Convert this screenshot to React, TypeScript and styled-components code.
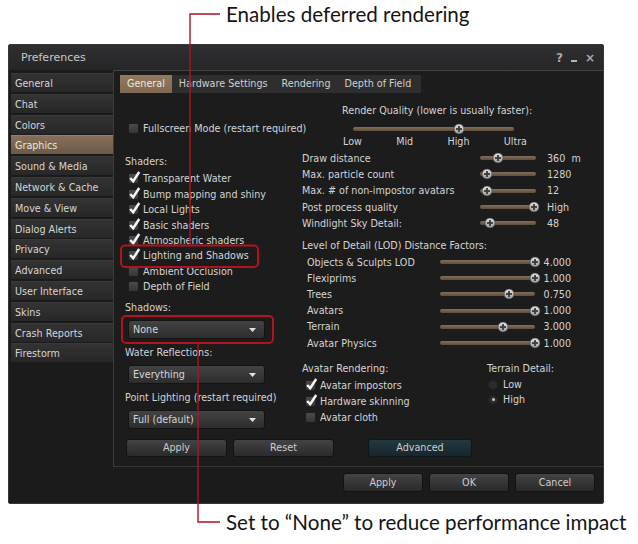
import React from "react";
import styled, { createGlobalStyle } from "styled-components";

const UI_FONT = `"DejaVu Sans", "Noto Sans", sans-serif`;
const NOTE_FONT = `Lato, "Open Sans", sans-serif`;
const RED = "#b3121f";

const Global = createGlobalStyle`
  html, body { margin: 0; padding: 0; background: #fff; }
  body { width: 638px; height: 544px; overflow: hidden; }
`;

const Page = styled.div`
  position: relative;
  width: 638px;
  height: 544px;
  display: flex;
  flex-direction: column;
  background: #fff;
`;

const Note = styled.div<{ $gapAfter?: number; $gapBefore?: number }>`
  font-family: ${NOTE_FONT};
  font-size: 20.6px;
  line-height: 28px;
  height: 28px;
  color: #141414;
  padding-left: 226px;
  white-space: nowrap;
  margin-top: ${(p) => p.$gapBefore ?? 0}px;
  margin-bottom: ${(p) => p.$gapAfter ?? 0}px;
`;

const Callouts = styled.svg`
  position: absolute;
  left: 0;
  top: 0;
  pointer-events: none;
`;

const Window = styled.div`
  margin-left: 8px;
  width: 596px;
  height: 460px;
  box-sizing: border-box;
  border: 1px solid #38353d;
  border-radius: 2px;
  background: #1b1b1b;
  display: flex;
  flex-direction: column;
  font-family: ${UI_FONT};
  font-size: 9.6px;
  color: #d4d4d4;
`;

const TitleBar = styled.div`
  height: 25px;
  flex: none;
  display: flex;
  align-items: center;
  justify-content: space-between;
  padding: 0 8px 0 12px;
  background: linear-gradient(#2f2e31, #262527);
`;

const Title = styled.span`
  font-size: 11px;
  color: #c9c9c9;
`;

const TitleIcons = styled.div`
  display: flex;
  align-items: center;
  gap: 8px;
  color: #a9a9a9;
  font-weight: bold;
`;

const Glyph = styled.span<{ $size: number }>`
  font-size: ${(p) => p.$size}px;
  line-height: 1;
`;

const MinBar = styled.span`
  width: 6px;
  height: 2px;
  margin-top: 6px;
  background: #b5b5b5;
`;

const Main = styled.div`
  height: 397px;
  flex: none;
  display: flex;
`;

const Sidebar = styled.div`
  width: 102px;
  padding: 3px 0 0 2px;
  display: flex;
  flex-direction: column;
  gap: 1.8px;
`;

const SideItem = styled.div<{ $active?: boolean }>`
  height: 19px;
  line-height: 19px;
  padding-left: 4px;
  color: ${(p) => (p.$active ? "#eee6dc" : "#d6d6d6")};
  background: ${(p) =>
    p.$active
      ? "linear-gradient(#86705a, #6c5944)"
      : "linear-gradient(#333333, #272727)"};
  border-top: 1px solid ${(p) => (p.$active ? "#97816a" : "#393939")};
  box-sizing: border-box;
  white-space: nowrap;
`;

const Panel = styled.div`
  flex: 1;
  box-sizing: border-box;
  border-top: 1px solid #454545;
  border-left: 1px solid #3c3c3c;
  border-bottom: 1px solid #383838;
  background: #1c1c1c;
  padding: 4px 0 0 6px;
  display: flex;
  flex-direction: column;
`;

const TabBar = styled.div`
  width: 301px;
  height: 18px;
  display: flex;
  background: #2e2e2e;
`;

const Tab = styled.div<{ $active?: boolean }>`
  padding: 0 7px;
  line-height: 18px;
  white-space: nowrap;
  color: ${(p) => (p.$active ? "#f0e8de" : "#d0d0d0")};
  background: ${(p) => (p.$active ? "linear-gradient(#927a60, #806950)" : "transparent")};
`;

const TopSection = styled.div`
  margin-top: 10px;
  display: flex;
`;

const TopLeft = styled.div`
  width: 213px;
  padding: 20px 0 0 8px;
  box-sizing: border-box;
`;

const RQBlock = styled.div`
  width: 200px;
  display: flex;
  flex-direction: column;
`;

const RQLabel = styled.div`
  padding-left: 9px;
  line-height: 15px;
  white-space: nowrap;
`;

const RQSliderRow = styled.div`
  margin: 5px 0 0 20px;
  height: 12px;
  display: flex;
  align-items: center;
`;

const Ticks = styled.div`
  margin-left: 10px;
  width: 184px;
  display: flex;
  justify-content: space-between;
  line-height: 14px;
`;

const Columns = styled.div`
  display: flex;
`;

const LeftCol = styled.div`
  width: 180px;
  padding-left: 5px;
  box-sizing: border-box;
  display: flex;
  flex-direction: column;
`;

const RightCol = styled.div`
  padding-left: 2px;
  display: flex;
  flex-direction: column;
`;

const Label = styled.div<{ $mt: number; $indent?: number }>`
  margin-top: ${(p) => p.$mt}px;
  padding-left: ${(p) => p.$indent ?? 0}px;
  line-height: 14px;
  white-space: nowrap;
`;

const CheckList = styled.div<{ $mt: number; $row: number; $indent: number }>`
  margin-top: ${(p) => p.$mt}px;
  padding-left: ${(p) => p.$indent}px;
  display: grid;
  grid-auto-rows: ${(p) => p.$row}px;
`;

const CheckRow = styled.label`
  display: flex;
  align-items: center;
  gap: 4px;
  white-space: nowrap;
`;

const Box = styled.span`
  position: relative;
  width: 11px;
  height: 11px;
  flex: none;
  box-sizing: border-box;
  border: 1px solid #1e1e1e;
  border-radius: 2px;
  background: linear-gradient(#4a4a4a, #363636);
`;

const CheckMark = styled.svg`
  position: absolute;
  left: -1px;
  top: -4px;
`;

const Dropdown = styled.div<{ $mt: number }>`
  margin: ${(p) => p.$mt}px 0 0 3px;
  width: 137px;
  height: 19px;
  box-sizing: border-box;
  border: 1px solid #141414;
  border-radius: 3px;
  background: linear-gradient(#434343, #2d2d2d);
  display: flex;
  align-items: center;
  justify-content: space-between;
  padding: 0 8px 0 4px;
  color: #d6d6d6;
`;

const SliderGrid = styled.div<{ $mt: number; $cols: string; $row: number }>`
  margin-top: ${(p) => p.$mt}px;
  display: grid;
  grid-template-columns: ${(p) => p.$cols};
  grid-auto-rows: ${(p) => p.$row}px;
  align-items: center;
  white-space: pre;
`;

const RowLabel = styled.span<{ $indent?: number }>`
  padding-left: ${(p) => p.$indent ?? 0}px;
`;

const Value = styled.span<{ $align: "left" | "right" }>`
  text-align: ${(p) => p.$align};
  padding-left: ${(p) => (p.$align === "left" ? 11 : 0)}px;
`;

const Track = styled.div<{ $w: number }>`
  position: relative;
  width: ${(p) => p.$w}px;
  height: 4px;
  border-radius: 2px;
  background: linear-gradient(#85705a, #5e4d3c);
`;

const Thumb = styled.svg`
  position: absolute;
  top: 50%;
  transform: translate(-50%, -50%);
`;

const BottomGroups = styled.div`
  margin-top: 11px;
  display: flex;
`;

const AvatarBlock = styled.div`
  width: 185px;
  display: flex;
  flex-direction: column;
`;

const TerrainBlock = styled.div`
  display: flex;
  flex-direction: column;
`;

const RadioList = styled.div`
  margin-top: 1px;
  padding-left: 1px;
  display: grid;
  grid-auto-rows: 15px;
`;

const RadioRow = styled.div`
  display: flex;
  align-items: center;
  gap: 5px;
`;

const RadioDot = styled.span<{ $on?: boolean }>`
  width: 10px;
  height: 10px;
  border-radius: 50%;
  box-sizing: border-box;
  background: #2b2b2b;
  border: 1px solid #232323;
  display: flex;
  align-items: center;
  justify-content: center;
  &::after {
    content: "";
    width: 3px;
    height: 3px;
    border-radius: 50%;
    background: ${(p) => (p.$on ? "#c8c8c8" : "transparent")};
  }
`;

const ButtonRow = styled.div`
  margin: 9.5px 0 0 6px;
  display: flex;
`;

const Button = styled.div<{ $w: number; $h: number; $ml?: number; $accent?: boolean }>`
  width: ${(p) => p.$w}px;
  height: ${(p) => p.$h}px;
  margin-left: ${(p) => p.$ml ?? 0}px;
  box-sizing: border-box;
  border: 1px solid ${(p) => (p.$accent ? "#0d181c" : "#131313")};
  border-radius: 3px;
  background: ${(p) =>
    p.$accent ? "linear-gradient(#243840, #17262c)" : "linear-gradient(#434343, #2a2a2a)"};
  color: #cdcdcd;
  display: flex;
  align-items: center;
  justify-content: center;
`;

const Footer = styled.div`
  flex: 1;
  display: flex;
  justify-content: flex-end;
  align-items: flex-start;
  padding: 6px 8px 0 0;
  gap: 6px;
`;

const Check = ({ on }: { on: boolean }) => (
  <Box>
    {on && (
      <CheckMark width="13" height="14" viewBox="0 0 13 14">
        <polyline points="2.2,8 5.2,11.3 11.2,2" fill="none" stroke="#f4f4f4" strokeWidth="2.5" />
      </CheckMark>
    )}
  </Box>
);

const Slider = ({ w, pct }: { w: number; pct: number }) => (
  <Track $w={w}>
    <Thumb width="11" height="11" viewBox="0 0 11 11" style={{ left: `${pct}%` }}>
      <defs>
        <linearGradient id="tg" x1="0" y1="0" x2="0" y2="1">
          <stop offset="0" stopColor="#e6e6e6" />
          <stop offset="1" stopColor="#9c9c9c" />
        </linearGradient>
      </defs>
      <circle cx="5.5" cy="5.5" r="5" fill="url(#tg)" stroke="#4a4a4a" strokeWidth="0.8" />
      <rect x="4.6" y="2.5" width="1.8" height="6" fill="#3a3a3a" />
      <rect x="2.5" y="4.6" width="6" height="1.8" fill="#3a3a3a" />
    </Thumb>
  </Track>
);

const Arrow = () => (
  <svg width="7" height="4" viewBox="0 0 7 4">
    <polygon points="0,0 7,0 3.5,4" fill="#e2e2e2" />
  </svg>
);

const sideItems = [
  "General", "Chat", "Colors", "Graphics", "Sound & Media", "Network & Cache", "Move & View",
  "Dialog Alerts", "Privacy", "Advanced", "User Interface", "Skins", "Crash Reports", "Firestorm",
];
const tabs = ["General", "Hardware Settings", "Rendering", "Depth of Field"];
const shaders: [string, boolean][] = [
  ["Transparent Water", true], ["Bump mapping and shiny", true], ["Local Lights", true],
  ["Basic shaders", true], ["Atmospheric shaders", true], ["Lighting and Shadows", true],
  ["Ambient Occlusion", false], ["Depth of Field", false],
];
const generalSliders: [string, number, string][] = [
  ["Draw distance", 32, "360  m"], ["Max. particle count", 12, "1280"],
  ["Max. # of non-impostor avatars", 12, "12"], ["Post process quality", 96, "High"],
  ["Windlight Sky Detail:", 18, "48"],
];
const lodSliders: [string, number, string][] = [
  ["Objects & Sculpts LOD", 100, "4.000"], ["Flexiprims", 100, "1.000"], ["Trees", 73, "0.750"],
  ["Avatars", 100, "1.000"], ["Terrain", 66, "3.000"], ["Avatar Physics", 100, "1.000"],
];
const avatarChecks: [string, boolean][] = [
  ["Avatar impostors", true], ["Hardware skinning", true], ["Avatar cloth", false],
];

export default function App() {
  return (
    <Page>
      <Global />
      <Note $gapAfter={16}>Enables deferred rendering</Note>
      <Window>
        <TitleBar>
          <Title>Preferences</Title>
          <TitleIcons>
            <Glyph $size={12}>?</Glyph>
            <MinBar />
            <Glyph $size={12}>×</Glyph>
          </TitleIcons>
        </TitleBar>
        <Main>
          <Sidebar>
            {sideItems.map((s) => (
              <SideItem key={s} $active={s === "Graphics"}>{s}</SideItem>
            ))}
          </Sidebar>
          <Panel>
            <TabBar>
              {tabs.map((t, i) => (
                <Tab key={t} $active={i === 0}>{t}</Tab>
              ))}
            </TabBar>
            <TopSection>
              <TopLeft>
                <CheckRow>
                  <Check on={false} />
                  Fullscreen Mode (restart required)
                </CheckRow>
              </TopLeft>
              <RQBlock>
                <RQLabel>Render Quality (lower is usually faster):</RQLabel>
                <RQSliderRow>
                  <Slider w={161} pct={66} />
                </RQSliderRow>
                <Ticks>
                  <span>Low</span>
                  <span>Mid</span>
                  <span>High</span>
                  <span>Ultra</span>
                </Ticks>
              </RQBlock>
            </TopSection>
            <Columns>
              <LeftCol>
                <Label $mt={6}>Shaders:</Label>
                <CheckList $mt={2.3} $row={15.4} $indent={3}>
                  {shaders.map(([t, on]) => (
                    <CheckRow key={t}>
                      <Check on={on} />
                      {t}
                    </CheckRow>
                  ))}
                </CheckList>
                <Label $mt={7}>Shadows:</Label>
                <Dropdown $mt={5}>
                  <span>None</span>
                  <Arrow />
                </Dropdown>
                <Label $mt={7}>Water Reflections:</Label>
                <Dropdown $mt={5}>
                  <span>Everything</span>
                  <Arrow />
                </Dropdown>
                <Label $mt={7}>Point Lighting (restart required)</Label>
                <Dropdown $mt={5}>
                  <span>Full (default)</span>
                  <Arrow />
                </Dropdown>
              </LeftCol>
              <RightCol>
                <SliderGrid $mt={1} $cols="178px 56px auto" $row={16.3}>
                  {generalSliders.map(([t, pct, v]) => (
                    <React.Fragment key={t}>
                      <RowLabel>{t}</RowLabel>
                      <Slider w={56} pct={pct} />
                      <Value $align="left">{v}</Value>
                    </React.Fragment>
                  ))}
                </SliderGrid>
                <Label $mt={7.5}>Level of Detail (LOD) Distance Factors:</Label>
                <SliderGrid $mt={1} $cols="138px 95px 36px" $row={16.2}>
                  {lodSliders.map(([t, pct, v]) => (
                    <React.Fragment key={t}>
                      <RowLabel $indent={5}>{t}</RowLabel>
                      <Slider w={95} pct={pct} />
                      <Value $align="right">{v}</Value>
                    </React.Fragment>
                  ))}
                </SliderGrid>
                <BottomGroups>
                  <AvatarBlock>
                    <Label $mt={0}>Avatar Rendering:</Label>
                    <CheckList $mt={1} $row={16} $indent={3}>
                      {avatarChecks.map(([t, on]) => (
                        <CheckRow key={t}>
                          <Check on={on} />
                          {t}
                        </CheckRow>
                      ))}
                    </CheckList>
                  </AvatarBlock>
                  <TerrainBlock>
                    <Label $mt={0}>Terrain Detail:</Label>
                    <RadioList>
                      <RadioRow>
                        <RadioDot />
                        Low
                      </RadioRow>
                      <RadioRow>
                        <RadioDot $on />
                        High
                      </RadioRow>
                    </RadioList>
                  </TerrainBlock>
                </BottomGroups>
              </RightCol>
            </Columns>
            <ButtonRow>
              <Button $w={101} $h={18}>Apply</Button>
              <Button $w={101} $h={18} $ml={6}>Reset</Button>
              <Button $w={104} $h={18} $ml={34} $accent>Advanced</Button>
            </ButtonRow>
          </Panel>
        </Main>
        <Footer>
          <Button $w={80} $h={19}>Apply</Button>
          <Button $w={80} $h={19}>OK</Button>
          <Button $w={80} $h={19}>Cancel</Button>
        </Footer>
      </Window>
      <Note $gapBefore={4}>Set to “None” to reduce performance impact</Note>
      <Callouts width="638" height="544" viewBox="0 0 638 544">
        <polyline points="220,14 190,14 190,245" fill="none" stroke={RED} strokeWidth="1.4" />
        <rect x="121" y="245.5" width="137" height="21.5" rx="4" fill="none" stroke={RED} strokeWidth="2" />
        <rect x="122" y="316" width="151" height="27" rx="4" fill="none" stroke={RED} strokeWidth="2" />
        <polyline points="198,343 198,522 220,522" fill="none" stroke={RED} strokeWidth="1.4" />
      </Callouts>
    </Page>
  );
}
